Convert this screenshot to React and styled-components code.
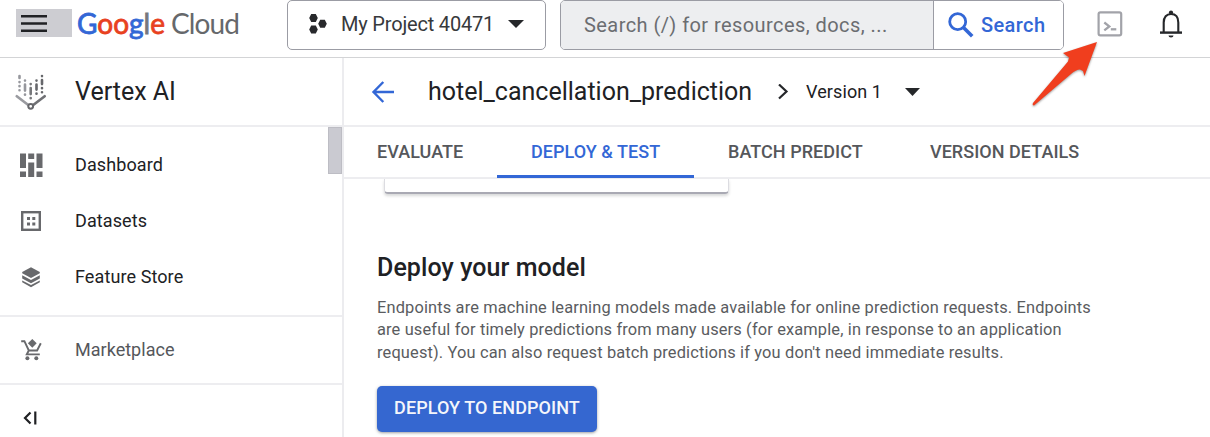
import React from 'react';
import styled, { createGlobalStyle } from 'styled-components';

const GlobalStyle = createGlobalStyle`
  * { box-sizing: border-box; }
  body { margin: 0; background: #fff; overflow: hidden; }
`;

const Page = styled.div`
  position: relative;
  width: 1210px;
  height: 437px;
  overflow: hidden;
  display: flex;
  flex-direction: column;
  font-family: Roboto, sans-serif;
  color: #202124;
  background: #fff;
`;

const Text = styled.span`
  font-size: ${(p) => p.$size}px;
  font-weight: ${(p) => p.$weight || 400};
  letter-spacing: ${(p) => p.$track || 0}px;
  color: ${(p) => p.$color || '#202124'};
  white-space: nowrap;
`;

const Header = styled.header`
  flex: none;
  display: flex;
  align-items: flex-start;
  height: 58px;
  border-bottom: 1px solid #d3d4d6;
`;

const Brand = styled.div`
  display: flex;
  width: 287px;
  height: 50px;
  padding: 9px 0 0 16px;
`;

const MenuButton = styled.button`
  flex: none;
  display: flex;
  align-items: center;
  width: 56px;
  height: 28px;
  padding: 0 0 0 5px;
  border: 0;
  background: #cdcdd2;
`;

const Logo = styled.div`
  display: flex;
  gap: 9px;
  margin: -3px 0 0 5px;
  font: 400 28px/34px Lato, sans-serif;
  white-space: nowrap;
`;

const Google = styled.span`
  width: 85px;
  letter-spacing: 0;
`;

const Letter = styled.span`
  color: ${(p) => p.$color};
  -webkit-text-stroke: 0.8px ${(p) => p.$color};
`;

const Cloud = styled.span`
  letter-spacing: -0.9px;
  color: #66686b;
`;

const ProjectPicker = styled.button`
  display: flex;
  align-items: center;
  width: 259px;
  height: 50px;
  padding: 0 0 3px 20px;
  border: 1px solid #9b9ca4;
  border-radius: 5px;
  background: #fff;
  font-family: inherit;
`;

const ProjectName = styled(Text)`
  width: 167px;
  margin-left: 13px;
  text-align: left;
`;

const SearchBar = styled.div`
  display: flex;
  width: 504px;
  height: 50px;
  margin-left: 14px;
  border: 1px solid #9b9ca4;
  border-radius: 5px;
  overflow: hidden;
`;

const SearchField = styled.div`
  display: flex;
  align-items: center;
  width: 373px;
  padding-left: 23px;
  background: #edeef0;
  border-right: 1px solid #9b9ca4;
`;

const SearchButton = styled.button`
  display: flex;
  align-items: center;
  gap: 7px;
  flex: 1;
  padding: 0 0 0 14px;
  border: 0;
  background: #fff;
  font-family: inherit;
`;

const HeaderActions = styled.div`
  display: flex;
  align-items: center;
  gap: 36px;
  height: 48px;
  padding-left: 33px;
`;

const Body = styled.div`
  flex: 1;
  display: flex;
  min-height: 0;
`;

const Sidebar = styled.nav`
  flex: none;
  width: 344px;
  border-right: 2px solid #ececef;
`;

const ProductTitle = styled.div`
  display: flex;
  align-items: center;
  gap: 28px;
  height: 69px;
  padding: 0 0 0 15px;
  border-bottom: 2px solid #ededf0;
`;

const NavScroll = styled.div`
  display: flex;
  justify-content: space-between;
  height: 190px;
  border-bottom: 2px solid #ededf0;
`;

const NavList = styled.div`
  padding-top: 10px;
`;

const NavItem = styled.a`
  display: flex;
  align-items: center;
  gap: 31px;
  height: ${(p) => p.$height || 56}px;
  padding-left: 18px;
`;

const NavLabel = styled(Text)`
  padding-bottom: 2px;
`;

const ScrollThumb = styled.div`
  width: 14px;
  height: 47px;
  background: #cacad1;
  border: 1px solid #bdbdc4;
`;

const Marketplace = styled.div`
  height: 68px;
  border-bottom: 2px solid #ededf0;
`;

const CollapseRow = styled.div`
  display: flex;
  padding: 26px 0 0 23px;
`;

const Main = styled.main`
  flex: 1;
  min-width: 0;
`;

const TitleBar = styled.div`
  display: flex;
  align-items: center;
  height: 69px;
  padding-left: 27px;
  border-bottom: 2px solid #ededf0;
`;

const ModelName = styled(Text)`
  width: 350px;
  margin-left: 33px;
`;

const VersionName = styled(Text)`
  width: 76px;
  margin: 0 23px 0 17px;
`;

const Tabs = styled.div`
  display: flex;
  height: 52px;
  border-bottom: 2px solid #ededf0;
`;

const Tab = styled.div`
  display: flex;
  align-items: center;
  width: ${(p) => p.$width}px;
  height: 51px;
  padding-left: ${(p) => p.$inset}px;
  border-bottom: 3px solid ${(p) => (p.$active ? '#3367d6' : 'transparent')};
`;

const Content = styled.section`
  display: flex;
  flex-direction: column;
  align-items: flex-start;
  padding-left: 33px;
`;

const CardEdge = styled.div`
  width: 345px;
  height: 15px;
  margin-left: 7px;
  border: 1px solid #dcdce1;
  border-top: 0;
  border-bottom: 2px solid #a9a9b3;
  border-radius: 0 0 4px 4px;
  box-shadow: 0 2px 3px rgba(60, 64, 67, 0.2);
`;

const Heading = styled.h2`
  margin: 58px 0 0;
  font-size: 25px;
  line-height: 32px;
  font-weight: 500;
  letter-spacing: 0.08px;
`;

const Description = styled.p`
  margin: 13px 0 0;
  font-size: 16.4px;
  line-height: 22.4px;
  letter-spacing: 0.15px;
  color: #5a5c60;
  white-space: nowrap;
`;

const DeployButton = styled.button`
  width: 220px;
  height: 46px;
  margin-top: 22px;
  padding: 0 0 3px;
  border: 0;
  border-radius: 5px;
  background: #3567d0;
  box-shadow: 0 1px 3px rgba(60, 64, 67, 0.5);
  font-family: inherit;
`;

const Pointer = styled.svg`
  position: absolute;
  left: 1026px;
  top: 36px;
  filter: drop-shadow(0 1px 1px rgba(0, 0, 0, 0.4));
`;

const Caret = ({ width = 16, height = 8 }) => (
  <svg width={width} height={height} viewBox="0 0 16 8" preserveAspectRatio="none">
    <path d="M0 0h16L8 8z" fill="#25272a" />
  </svg>
);

const MenuIcon = () => (
  <svg width="26" height="18" viewBox="0 0 26 18" stroke="#202124" strokeWidth="2.4">
    <path d="M0 2.300h26M0 9.500h26M0 16.700h26" />
  </svg>
);

const ProjectIcon = () => (
  <svg width="20" height="22" viewBox="0 0 20 22" fill="#28292c">
    <path d="M3.200 1h4.600l2 4-2 4H3.200l-2-4zM3.200 12.500h4.600l2 4-2 4H3.200l-2-4zM12.200 6.800h4.600l2 4-2 4h-4.600l-2-4z" />
  </svg>
);

const SearchIcon = () => (
  <svg width="26" height="26" viewBox="0 0 26 26" fill="none" stroke="#3367d6">
    <circle cx="9.7" cy="9.7" r="8" strokeWidth="2.8" />
    <path d="M15.5 15.5l8.7 8.7" strokeWidth="3.6" />
  </svg>
);

const ShellIcon = () => (
  <svg width="26" height="26" viewBox="0 0 26 26" fill="none" stroke="#a2a3a9">
    <rect x="1.6" y="1.3" width="22.600" height="23" rx="1.8" strokeWidth="2.2" />
    <path d="M7.3 11.500l5 3.900-5 3.900" strokeWidth="2.3" />
    <path d="M13.800 18.300h5.500" strokeWidth="2.3" />
  </svg>
);

const BellIcon = () => (
  <svg width="24" height="28" viewBox="0 0 24 28" fill="none" stroke="#25272a">
    <path d="M4.7 22v-9.5C4.7 7 7.5 4 12 4s7.3 3 7.3 8.500V22" strokeWidth="2.1" />
    <path d="M1 22.600h22" strokeWidth="2.4" />
    <path d="M9.500 25.500h5a2.500 2 0 0 1-5 0z" fill="#25272a" stroke="none" />
    <circle cx="12" cy="2.600" r="2.100" fill="#25272a" stroke="none" />
  </svg>
);

const VertexIcon = () => (
  <svg width="32" height="36" viewBox="0 0 32 36" fill="none">
    <g strokeWidth="2.6" strokeLinecap="round">
      <path d="M4.500 2v17.500" stroke="#96979d" strokeDasharray="2 4 .1 4 .1 4 .1 4" />
      <path d="M10 6.500v17" stroke="#96979d" strokeDasharray=".1 4 6 4 .1 4" />
      <path d="M15.700 10v18" stroke="#77787b" strokeDasharray=".1 4 6 4 .1 4" />
      <path d="M21.500 6.500v17" stroke="#66676b" strokeDasharray=".1 4 5 4 .1 4" />
      <path d="M27 2v17.500" stroke="#66676b" strokeDasharray=".1 4 4 4 .1 4 .1 4" />
    </g>
    <path d="M1.800 22.300l11.800 9" stroke="#9a9ba0" strokeWidth="2.700" strokeLinecap="round" />
    <path d="M29.700 22.300l-11.800 9" stroke="#707175" strokeWidth="2.700" strokeLinecap="round" />
    <circle cx="15.700" cy="32.300" r="2.400" fill="#fff" stroke="#66676b" strokeWidth="2" />
  </svg>
);

const DashboardIcon = () => (
  <svg width="26" height="26" viewBox="0 0 26 26" fill="#68696c">
    <path d="M2 1.500h6V16H2zM2 19.500h6V25H2zM10.200 1.500h6V7h-6zM10.200 10.500h6V25h-6zM18.500 1.500h6V16h-6zM18.500 19.500h6V25h-6z" />
  </svg>
);

const DatasetsIcon = () => (
  <svg width="26" height="26" viewBox="0 0 26 26">
    <rect x="4.200" y="4.200" width="17.600" height="17.600" fill="none" stroke="#68696c" strokeWidth="2.400" />
    <path d="M9 9h3v3H9zM14.300 9h3v3h-3zM9 14.500h3v3H9zM14.300 14.500h3v3h-3z" fill="#68696c" />
  </svg>
);

const FeatureStoreIcon = () => (
  <svg width="26" height="26" viewBox="0 0 26 26" fill="#68696c">
    <path d="M13 3.300l8.800 4.800v1.200L13 14 4.200 9.300V8.100z" />
    <path d="M4.200 11.300l8.800 4.700 8.800-4.700v3.300L13 19.300l-8.800-4.700z" />
    <path d="M4.200 16.500l8.800 4.600 8.800-4.600v1.800L13 23.200l-8.800-4.900z" />
  </svg>
);

const CartIcon = () => (
  <svg width="26" height="26" viewBox="0 0 26 26" fill="none" stroke="#68696c" strokeWidth="1.900">
    <path d="M3.200 4.200h3.200l4.400 9.300h8.300l3.700-7.300M10.800 13.500l-2 3.900h13" />
    <path d="M14.300 2l4.400 4.300-4.400 4.400-4.400-4.400z" fill="#68696c" stroke="none" />
    <circle cx="9.400" cy="21.200" r="2" fill="#68696c" stroke="none" />
    <circle cx="18.300" cy="21.200" r="2" fill="#68696c" stroke="none" />
  </svg>
);

const CollapseIcon = () => (
  <svg width="14" height="14" viewBox="0 0 14 14" fill="none" stroke="#202124" strokeWidth="2.200">
    <path d="M7.500 1.500L2 7l5.500 5.500M12.300.5v13" />
  </svg>
);

const BackIcon = () => (
  <svg width="24" height="22" viewBox="0 0 24 22" fill="none" stroke="#3367d6" strokeWidth="2.400">
    <path d="M12.300 1L2.500 11l9.800 10M2.500 11H23" />
  </svg>
);

const ChevronIcon = () => (
  <svg width="11" height="16" viewBox="0 0 11 16" fill="none" stroke="#25272a" strokeWidth="2.200">
    <path d="M1 .500l7.500 7L1 14.500" />
  </svg>
);

const navItems = [
  { label: 'Dashboard', Icon: DashboardIcon },
  { label: 'Datasets', Icon: DatasetsIcon },
  { label: 'Feature Store', Icon: FeatureStoreIcon },
];

const tabs = [
  { label: 'EVALUATE', width: 153, inset: 33 },
  { label: 'DEPLOY & TEST', width: 197, inset: 34, active: true },
  { label: 'BATCH PREDICT', width: 202, inset: 34 },
  { label: 'VERSION DETAILS', width: 220, inset: 34 },
];

const googleLetters = [
  ['G', '#3367d6'],
  ['o', '#e8411f'],
  ['o', '#e8411f'],
  ['g', '#3367d6'],
  ['l', '#77787b'],
  ['e', '#e8411f'],
];

export default function App() {
  return (
    <Page>
      <GlobalStyle />
      <Header>
        <Brand>
          <MenuButton aria-label="Menu"><MenuIcon /></MenuButton>
          <Logo>
            <Google>
              {googleLetters.map(([letter, color], i) => (
                <Letter key={i} $color={color}>{letter}</Letter>
              ))}
            </Google>
            <Cloud>Cloud</Cloud>
          </Logo>
        </Brand>
        <ProjectPicker>
          <ProjectIcon />
          <ProjectName $size={20} $track={-0.18} $color="#37393c">My Project 40471</ProjectName>
          <Caret />
        </ProjectPicker>
        <SearchBar>
          <SearchField>
            <Text $size={20} $track={0.43} $color="#6b6d71">Search (/) for resources, docs, ...</Text>
          </SearchField>
          <SearchButton>
            <SearchIcon />
            <Text $size={20} $weight={500} $track={0.4} $color="#3367d6">Search</Text>
          </SearchButton>
        </SearchBar>
        <HeaderActions>
          <ShellIcon />
          <BellIcon />
        </HeaderActions>
      </Header>
      <Body>
        <Sidebar>
          <ProductTitle>
            <VertexIcon />
            <Text $size={25}>Vertex AI</Text>
          </ProductTitle>
          <NavScroll>
            <NavList>
              {navItems.map(({ label, Icon }) => (
                <NavItem key={label}>
                  <Icon />
                  <NavLabel $size={18} $track={0.1}>{label}</NavLabel>
                </NavItem>
              ))}
            </NavList>
            <ScrollThumb />
          </NavScroll>
          <Marketplace>
            <NavItem $height={66}>
              <CartIcon />
              <NavLabel $size={18} $track={0.02} $color="#55575b">Marketplace</NavLabel>
            </NavItem>
          </Marketplace>
          <CollapseRow><CollapseIcon /></CollapseRow>
        </Sidebar>
        <Main>
          <TitleBar>
            <BackIcon />
            <ModelName $size={25}>hotel_cancellation_prediction</ModelName>
            <ChevronIcon />
            <VersionName $size={18} $track={0.1}>Version 1</VersionName>
            <Caret width={15} />
          </TitleBar>
          <Tabs>
            {tabs.map((t) => (
              <Tab key={t.label} $width={t.width} $inset={t.inset} $active={t.active}>
                <Text $size={18} $weight={500} $track={0.04} $color={t.active ? '#3367d6' : '#55575b'}>
                  {t.label}
                </Text>
              </Tab>
            ))}
          </Tabs>
          <Content>
            <CardEdge />
            <Heading>Deploy your model</Heading>
            <Description>
              Endpoints are machine learning models made available for online prediction requests. Endpoints
              <br />
              are useful for timely predictions from many users (for example, in response to an application
              <br />
              request). You can also request batch predictions if you don't need immediate results.
            </Description>
            <DeployButton>
              <Text $size={18} $weight={500} $track={0.08} $color="#f4f6fb">DEPLOY TO ENDPOINT</Text>
            </DeployButton>
          </Content>
        </Main>
      </Body>
      <Pointer width="76" height="76" viewBox="0 0 76 76" fill="#f03e1e">
        <path d="M71 6L37 17l6 4.500-1 4L7 67q-1 2 1 2.500L45 38q5-4.500 9-4.500l3 1.500 1.500 5z" />
      </Pointer>
    </Page>
  );
}
